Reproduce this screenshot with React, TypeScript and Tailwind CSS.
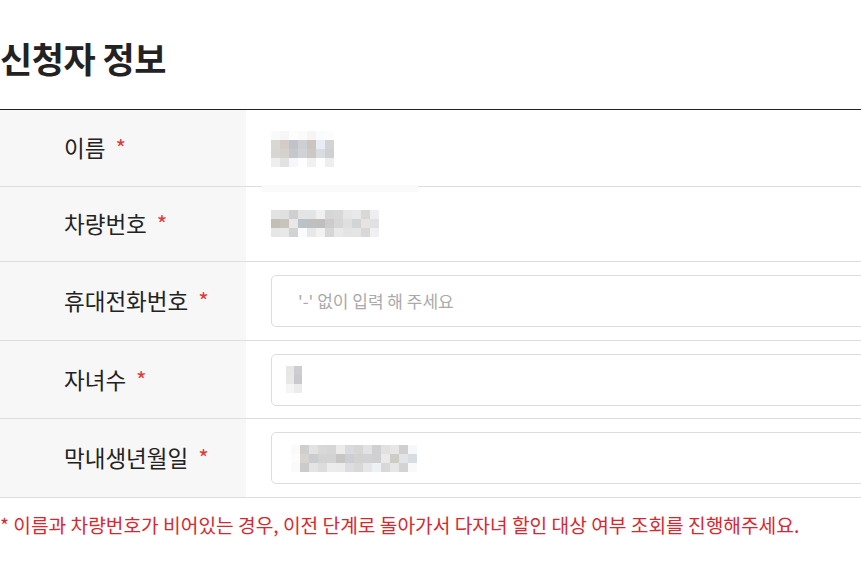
import type { ReactNode } from "react"

// blurred (pixelated) values as in the original capture
const nameMosaic = [
  ["bg-[#fafafa]", "bg-[#f6f6f6]", "bg-[#fdfdfd]", "bg-[#fbfbfb]", "bg-[#f5f5f5]", "bg-[#fafbfc]", "bg-[#fcfcfc]"],
  ["bg-[#dad6d2]", "bg-[#d5cdc5]", "bg-[#bec4c9]", "bg-[#cdd0d3]", "bg-[#cbc5bd]", "bg-[#e8edf5]", "bg-[#d3d3d3]"],
  ["bg-[#d8d6d3]", "bg-[#d5d2cd]", "bg-[#c5c9cd]", "bg-[#d0d3d5]", "bg-[#cdc8c3]", "bg-[#d9dde3]", "bg-[#d0d0d0]"],
  ["bg-[#eeeeee]", "bg-[#e2e2e0]", "bg-[#f5f7fa]", "bg-[#ffffff]", "bg-[#f1f1f1]", "bg-[#ffffff]", "bg-[#eeeeee]"],
]

const carMosaic = [
  ["bg-[#e2e2e2]", "bg-[#e0e0e0]", "bg-[#cfcfcf]", "bg-[#e4e4e4]", "bg-[#e2e4e6]", "bg-[#f0f0f0]", "bg-[#d6d6d6]", "bg-[#d8d8d8]", "bg-[#e6e6e6]", "bg-[#e7e9eb]", "bg-[#d8d8d8]", "bg-[#eeeef0]"],
  ["bg-[#c4beb9]", "bg-[#c9c3be]", "bg-[#e8e8e8]", "bg-[#bcc3c8]", "bg-[#c0c0c0]", "bg-[#bfbfbf]", "bg-[#cfcbc8]", "bg-[#d4d6d8]", "bg-[#dedfde]", "bg-[#d2d4d6]", "bg-[#e6e3e0]", "bg-[#dfe1e5]"],
  ["bg-[#e6e6e6]", "bg-[#e8e8e8]", "bg-[#d2d2d2]", "bg-[#fafbfc]", "bg-[#e8e8e8]", "bg-[#f2f2f2]", "bg-[#d6d6d6]", "bg-[#e9e9e9]", "bg-[#e4e4e4]", "bg-[#e5e5e5]", "bg-[#d8d8d8]", "bg-[#f0f0f2]"],
]

const kidsMosaic = [
  ["bg-[#e6e6e6]", "bg-[#cdcdd0]"],
  ["bg-[#e8e8e8]", "bg-[#c9cacc]"],
  ["bg-[#f5f5f5]", "bg-[#ececec]"],
]

const birthMosaic = [
  ["bg-[#fbfaf9]", "bg-[#cfcfcf]", "bg-[#e2e2e2]", "bg-[#d8d8d8]", "bg-[#d6d6d6]", "bg-[#ebebeb]", "bg-[#d9dade]", "bg-[#d6d6d6]", "bg-[#e2e2e2]", "bg-[#cfd0d2]", "bg-[#e3e1df]", "bg-[#e6e6e6]", "bg-[#cfcfcf]", "bg-[#f5f7f9]"],
  ["bg-[#fcfcfc]", "bg-[#d7d3cf]", "bg-[#cbccd0]", "bg-[#d3d3d3]", "bg-[#d3d3d3]", "bg-[#c8c6c4]", "bg-[#ccced2]", "bg-[#d2d2d2]", "bg-[#d2d2d2]", "bg-[#d0d0d2]", "bg-[#eaeaea]", "bg-[#cfcbc5]", "bg-[#e1e3e6]", "bg-[#d8dde3]"],
  ["bg-[#fbfaf9]", "bg-[#cbcbcb]", "bg-[#e4e4e4]", "bg-[#dcdcdc]", "bg-[#ececec]", "bg-[#ebebeb]", "bg-[#dcdde0]", "bg-[#d8d8d8]", "bg-[#e6e6e6]", "bg-[#eef1f5]", "bg-[#d8d8d8]", "bg-[#e6e6e6]", "bg-[#d3d3d3]", "bg-[#f8f9fb]"],
]

function Mosaic({ cells, cell = "w-[9px] h-[9px]" }: { cells: string[][]; cell?: string }) {
  return (
    <div className="flex flex-col">
      {cells.map((row, i) => (
        <div key={i} className="flex">
          {row.map((c, j) => (
            <div key={j} className={`${cell} ${c}`} />
          ))}
        </div>
      ))}
    </div>
  )
}

function Row({ label, children, className = "" }: { label: string; children: ReactNode; className?: string }) {
  return (
    <div className={`flex border-b border-[#dddddd] ${className}`}>
      <div className="w-[246px] shrink-0 bg-[#f7f7f7] pl-16 flex items-center text-[22.5px] text-[#222222]">
        {label}
        <span className="ml-[10px] text-[#e03a3a]">*</span>
      </div>
      <div className="relative flex-1 pl-[25px] flex items-center">{children}</div>
    </div>
  )
}

function Field({ children }: { children: ReactNode }) {
  return (
    <div className="w-[640px] h-[52px] border border-[#dddddd] rounded-[5px] bg-white flex items-center pl-[14px]">
      {children}
    </div>
  )
}

export default function App() {
  return (
    <div className="w-[861px] h-[567px] overflow-hidden bg-white font-['Noto_Sans_CJK_KR',sans-serif]">
      <div className="w-[920px]">
        <h2 className="pt-[34px] pb-[27px] text-[35px] leading-[48px] font-bold text-[#222222] tracking-[-0.5px]">
          신청자 정보
        </h2>

        <div className="border-t border-[#222222]">
          <Row label="이름" className="h-[77px]">
            <div className="mt-[2px]">
              <Mosaic cells={nameMosaic} />
            </div>
            <div className="absolute left-[16px] bottom-[-6px] w-[156px] h-[7px] bg-[#fafafa]" />
          </Row>
          <Row label="차량번호" className="h-[75px]">
            <div className="-mt-[1px]">
              <Mosaic cells={carMosaic} />
            </div>
          </Row>
          <Row label="휴대전화번호" className="h-[79px]">
            <Field>
              <span className="pl-[12px] text-[17px] text-[#aaaaaa]">&apos;-&apos; 없이 입력 해 주세요</span>
            </Field>
          </Row>
          <Row label="자녀수" className="h-[78px]">
            <Field>
              <Mosaic cells={kidsMosaic} cell="w-[8px] h-[9px]" />
            </Field>
          </Row>
          <Row label="막내생년월일" className="h-[79px]">
            <Field>
              <div className="pl-[5px]">
                <Mosaic cells={birthMosaic} />
              </div>
            </Field>
          </Row>
        </div>

        <p className="mt-[14px] text-[19.2px] leading-[26px] text-[#d7282f]">
          * 이름과 차량번호가 비어있는 경우, 이전 단계로 돌아가서 다자녀 할인 대상 여부 조회를 진행해주세요.
        </p>
      </div>
    </div>
  )
}
